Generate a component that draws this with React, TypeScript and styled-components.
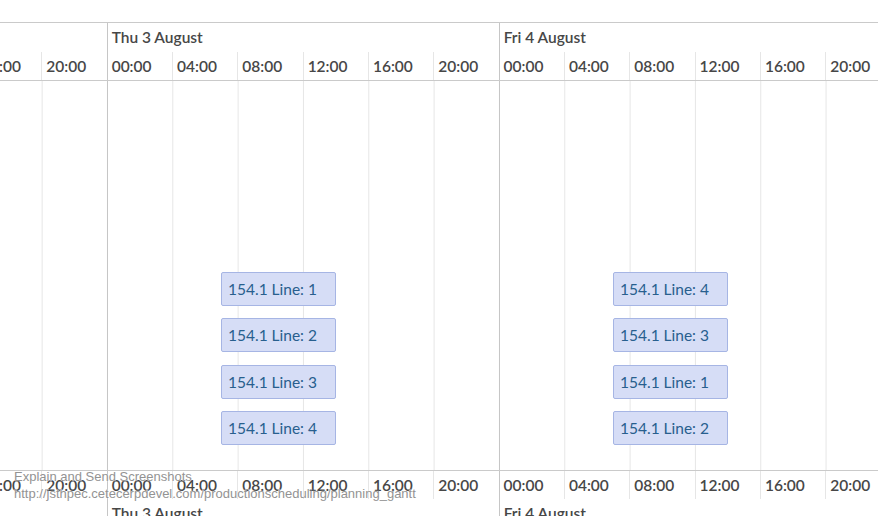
import styled, { createGlobalStyle } from "styled-components";

const DAY_W = 392;
const HOUR_COL = DAY_W / 6;
const PX_PER_HOUR = DAY_W / 24;
const VIEW_START = 106.67 - DAY_W;

const GlobalStyle = createGlobalStyle`
  html, body {
    margin: 0;
    padding: 0;
    background: #fff;
    overflow: hidden;
  }
  body {
    font-family: Lato, "Noto Sans", sans-serif;
  }
`;

const Page = styled.div`
  position: relative;
  width: 878px;
  height: 516px;
  overflow: hidden;
  padding-top: 22px;
  box-sizing: border-box;
`;

const Timeline = styled.div`
  width: ${DAY_W * 3}px;
  margin-left: ${VIEW_START}px;
  border-top: 1px solid #cacaca;
`;

const DateRow = styled.div`
  display: flex;
  height: 29px;
`;

const DayLabel = styled.div`
  flex: none;
  width: ${DAY_W}px;
  box-sizing: border-box;
  border-left: 1px solid #c6c6c6;
  padding-left: 4px;
  font-size: 15.5px;
  font-weight: 600;
  line-height: 29px;
  color: #474747;
  white-space: nowrap;
`;

const HourRow = styled.div<{ $bottom?: boolean }>`
  display: flex;
  height: 28px;
  ${(p) => (p.$bottom ? "border-top: 1px solid #cacaca;" : "border-bottom: 1px solid #cacaca;")}
`;

const HourCell = styled.div<{ $dayStart?: boolean }>`
  flex: none;
  width: ${HOUR_COL}px;
  box-sizing: border-box;
  border-left: 1px solid ${(p) => (p.$dayStart ? "#c6c6c6" : "#e6e6e6")};
  padding-left: 4px;
  font-size: 15.5px;
  font-weight: 600;
  line-height: 28px;
  color: #474747;
  white-space: nowrap;
`;

const Body = styled.div`
  height: 389px;
  box-sizing: border-box;
  padding-top: 185px;
  background:
    linear-gradient(to right, #c6c6c6 1px, transparent 1px) 0 0 / ${DAY_W}px 100% repeat-x,
    linear-gradient(to right, #e6e6e6 1px, transparent 1px) 0 0 / ${HOUR_COL}px 100% repeat-x;
`;

const Lane = styled.div`
  position: relative;
  height: 46.34px;
`;

const Bar = styled.div`
  position: absolute;
  top: 6px;
  height: 34px;
  box-sizing: border-box;
  background: #d6ddf6;
  border: 1px solid #a6b5e4;
  border-radius: 2px;
  padding-left: 6px;
  font-size: 15.5px;
  line-height: 32px;
  color: #285f8e;
  white-space: nowrap;
  overflow: hidden;
`;

const ScreenshotNote = styled.div`
  position: absolute;
  left: 14px;
  top: 468px;
  font-family: "Liberation Sans", Arial, sans-serif;
  font-size: 13px;
  line-height: 17px;
  color: #939393;
  text-shadow: 0 0 1px #fff, 0 0 1px #fff;
  pointer-events: none;
`;

const days = ["Wed 2 August", "Thu 3 August", "Fri 4 August"];
const hours = ["00:00", "04:00", "08:00", "12:00", "16:00", "20:00"];

// one entry per lane: day index, start hour, duration in hours, label
const lanes: { day: number; start: number; dur: number; label: string }[][] = [
  [
    { day: 1, start: 7, dur: 7, label: "154.1 Line: 1" },
    { day: 2, start: 7, dur: 7, label: "154.1 Line: 4" },
  ],
  [
    { day: 1, start: 7, dur: 7, label: "154.1 Line: 2" },
    { day: 2, start: 7, dur: 7, label: "154.1 Line: 3" },
  ],
  [
    { day: 1, start: 7, dur: 7, label: "154.1 Line: 3" },
    { day: 2, start: 7, dur: 7, label: "154.1 Line: 1" },
  ],
  [
    { day: 1, start: 7, dur: 7, label: "154.1 Line: 4" },
    { day: 2, start: 7, dur: 7, label: "154.1 Line: 2" },
  ],
];

function Hours({ bottom }: { bottom?: boolean }) {
  return (
    <HourRow $bottom={bottom}>
      {days.map((d) =>
        hours.map((h, i) => (
          <HourCell key={d + h} $dayStart={i === 0}>
            {h}
          </HourCell>
        ))
      )}
    </HourRow>
  );
}

function Dates() {
  return (
    <DateRow>
      {days.map((d) => (
        <DayLabel key={d}>{d}</DayLabel>
      ))}
    </DateRow>
  );
}

function App() {
  return (
    <Page>
      <GlobalStyle />
      <Timeline>
        <Dates />
        <Hours />
        <Body>
          {lanes.map((lane, i) => (
            <Lane key={i}>
              {lane.map((b) => (
                <Bar
                  key={b.label + b.day}
                  style={{
                    left: b.day * DAY_W + b.start * PX_PER_HOUR,
                    width: b.dur * PX_PER_HOUR + 1,
                  }}
                >
                  {b.label}
                </Bar>
              ))}
            </Lane>
          ))}
        </Body>
        <Hours bottom />
        <Dates />
      </Timeline>
      <ScreenshotNote>
        Explain and Send Screenshots
        <br />
        http://jsthpec.cetecerpdevel.com/productionscheduling/planning_gantt
      </ScreenshotNote>
    </Page>
  );
}

export default App;
